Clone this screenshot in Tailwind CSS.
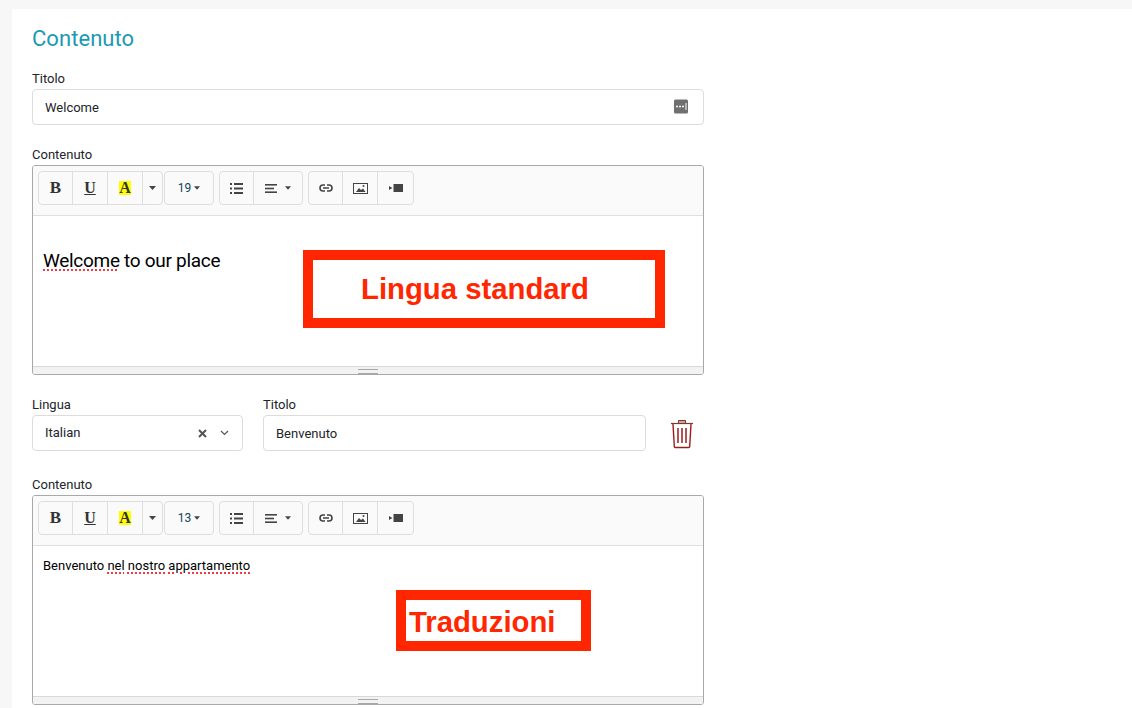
<!DOCTYPE html>
<html lang="it">
<head>
<meta charset="utf-8">
<script src="https://cdn.jsdelivr.net/npm/@tailwindcss/browser@4"></script>
<title>Contenuto</title>
</head>
<body class="m-0 w-[1132px] h-[708px] overflow-hidden bg-[#f7f7f8] font-['Roboto',sans-serif] text-[#212529]">
<div class="relative ml-[12px] mt-[9px] h-[699px] bg-white pl-[20px] w-[1120px]">
  <h2 class="text-[22px] tracking-[0.05px] leading-[26px] pt-[17px] h-[60px] box-border text-[#1b9ab2] font-normal">Contenuto</h2>

  <label class="block text-[13px] leading-[20px] w-[672px]">Titolo</label>
  <div class="w-[672px] h-[36px] border border-[#dcdcdc] rounded-[4px] flex items-center justify-between pl-[12px] pr-[14px] text-[13px] box-border">
    <span class="pt-[1px]">Welcome</span>
    <svg width="16" height="15" viewBox="0 0 16 15" class="relative -top-[1px]"><rect x="1" y="0.5" width="14" height="14" rx="1.5" fill="#6f6f6f"/><circle cx="4" cy="7.5" r="1" fill="#fff"/><circle cx="7" cy="7.5" r="1" fill="#fff"/><circle cx="10" cy="7.5" r="1" fill="#fff"/><rect x="12.5" y="4" width="1" height="7" fill="#fff"/></svg>
  </div>

  <label class="block text-[13px] leading-[20px] mt-[20px]">Contenuto</label>
  <div class="w-[672px] h-[210px] border border-[#a9a9a9] rounded-[3px] box-border flex flex-col overflow-hidden">
    <div class="h-[50px] bg-[#fafafa] border-b border-[#e0e0e0] pl-[5px] pt-[5px] flex gap-[5px] box-border shrink-0">
      <div class="flex h-[34px]">
        <div class="flex h-[34px] border border-[#dedede] rounded-[4px] box-border divide-x divide-[#dedede]">
          <span class="w-[34px] flex items-center justify-center font-['Liberation_Serif',serif] font-bold text-[17px] text-[#333]">B</span>
          <span class="w-[35px] flex items-center justify-center font-['Liberation_Serif',serif] font-bold text-[16px] text-[#333] underline">U</span>
          <span class="w-[35px] flex items-center justify-center"><span class="bg-[#ffff00] w-[12px] h-[14px] flex items-center justify-center font-['Liberation_Serif',serif] font-bold text-[16px] leading-[14px] text-[#333]">A</span></span>
          <span class="w-[19px] flex items-center justify-center"><svg width="7" height="4" viewBox="0 0 7 4"><path d="M0 0h7L3.5 4z" fill="#444"/></svg></span>
        </div>
        <div class="ml-[1px] w-[50px] flex items-center justify-center gap-[3px] border border-[#dedede] rounded-[4px] box-border text-[12px] text-[#16425b]">19 <svg width="6" height="4" viewBox="0 0 7 4"><path d="M0 0h7L3.5 4z" fill="#444"/></svg></div>
      </div>
      <div class="flex h-[34px] border border-[#dedede] rounded-[4px] box-border divide-x divide-[#dedede]">
        <span class="w-[34px] flex items-center justify-center"><svg width="13" height="11" viewBox="0 0 13 11" fill="#444"><rect y="0" width="2" height="2"/><rect y="4.5" width="2" height="2"/><rect y="9" width="2" height="2"/><rect x="4" y="0" width="9" height="2"/><rect x="4" y="4.5" width="9" height="2"/><rect x="4" y="9" width="9" height="2"/></svg></span>
        <span class="w-[48px] flex items-center justify-center gap-[8px]"><svg width="12" height="9" viewBox="0 0 12 9" fill="#444"><rect width="12" height="1.6"/><rect y="3.7" width="9" height="1.6"/><rect y="7.4" width="12" height="1.6"/></svg><svg width="6" height="4" viewBox="0 0 7 4"><path d="M0 0h7L3.5 4z" fill="#444"/></svg></span>
      </div>
      <div class="flex h-[34px] border border-[#dedede] rounded-[4px] box-border divide-x divide-[#dedede]">
        <span class="w-[34px] flex items-center justify-center"><svg width="14" height="8" viewBox="0 0 14 8" fill="none" stroke="#444" stroke-width="1.6"><path d="M6 1H4a3 3 0 0 0 0 6h2M8 1h2a3 3 0 0 1 0 6H8M4 4h6"/></svg></span>
        <span class="w-[35px] flex items-center justify-center"><svg width="15" height="11" viewBox="0 0 15 11"><rect x="0.5" y="0.5" width="14" height="10" fill="none" stroke="#444"/><path d="M3 9l3-4 2 2 2-1.5L12.5 9z" fill="#444"/><circle cx="10.5" cy="3" r="1" fill="#444"/></svg></span>
        <span class="w-[35px] flex items-center justify-center"><svg width="14" height="8" viewBox="0 0 14 8" fill="#444"><rect x="4.5" y="0" width="9.5" height="8"/><path d="M0 2l3.5 2L0 6z"/></svg></span>
      </div>
    </div>
    <div class="flex-1 bg-white pl-[10px] pt-[31px] text-[19px] leading-[28px] text-black tracking-[-0.3px]"><span class="underline decoration-dotted decoration-[#ee3b44] decoration-2 underline-offset-[2px]">Welcome</span> to our place</div>
    <div class="h-[8px] bg-[#f2f2f2] border-t border-[#d8d8d8] box-border flex justify-center items-center shrink-0">
      <div class="w-[20px] h-[5px] border-y border-[#a8a8a8] box-border relative top-[1px]"></div>
    </div>
  </div>

  <div class="flex w-[672px] mt-[20px]">
    <div class="w-[211px]">
      <label class="block text-[13px] leading-[20px]">Lingua</label>
      <div class="h-[36px] border border-[#dcdcdc] rounded-[4px] box-border flex items-center pl-[12px] pr-[13px] text-[13px]">
        <span class="flex-1">Italian</span>
        <svg width="9" height="9" viewBox="0 0 9 9" stroke="#555" stroke-width="2" class="mr-[13px]"><path d="M1 1l7 7M8 1l-7 7"/></svg>
        <svg width="9" height="6" viewBox="0 0 9 6" fill="none" stroke="#555" stroke-width="1.2"><path d="M1 1l3.5 3.5L8 1"/></svg>
      </div>
    </div>
    <div class="w-[383px] ml-[20px]">
      <label class="block text-[13px] leading-[20px]">Titolo</label>
      <div class="h-[36px] border border-[#dcdcdc] rounded-[4px] box-border flex items-center pl-[12px] pt-[1px] text-[13px]">Benvenuto</div>
    </div>
    <div class="ml-[24px] pt-[24px]">
      <svg width="24" height="30" viewBox="0 0 24 30" fill="none" stroke="#9c1c1c" class="block">
        <path d="M1 4.5h22" stroke="#7a3b2e" stroke-width="1.2"/>
        <path d="M8.5 4V1.5h7V4" stroke="#7a3b2e" fill="#c9a79d"/>
        <path d="M3 5l1.3 22.5a1 1 0 0 0 1 1h13.4a1 1 0 0 0 1-1L21 5" stroke-width="1.4"/>
        <path d="M8 9v15M12 9v15M16 9v15" stroke-width="1.5"/>
      </svg>
    </div>
  </div>

  <label class="block text-[13px] leading-[20px] mt-[24px]">Contenuto</label>
  <div class="w-[672px] h-[210px] border border-[#a9a9a9] rounded-[3px] box-border flex flex-col overflow-hidden">
    <div class="h-[50px] bg-[#fafafa] border-b border-[#e0e0e0] pl-[5px] pt-[5px] flex gap-[5px] box-border shrink-0">
      <div class="flex h-[34px]">
        <div class="flex h-[34px] border border-[#dedede] rounded-[4px] box-border divide-x divide-[#dedede]">
          <span class="w-[34px] flex items-center justify-center font-['Liberation_Serif',serif] font-bold text-[17px] text-[#333]">B</span>
          <span class="w-[35px] flex items-center justify-center font-['Liberation_Serif',serif] font-bold text-[16px] text-[#333] underline">U</span>
          <span class="w-[35px] flex items-center justify-center"><span class="bg-[#ffff00] w-[12px] h-[14px] flex items-center justify-center font-['Liberation_Serif',serif] font-bold text-[16px] leading-[14px] text-[#333]">A</span></span>
          <span class="w-[19px] flex items-center justify-center"><svg width="7" height="4" viewBox="0 0 7 4"><path d="M0 0h7L3.5 4z" fill="#444"/></svg></span>
        </div>
        <div class="ml-[1px] w-[50px] flex items-center justify-center gap-[3px] border border-[#dedede] rounded-[4px] box-border text-[12px] text-[#16425b]">13 <svg width="6" height="4" viewBox="0 0 7 4"><path d="M0 0h7L3.5 4z" fill="#444"/></svg></div>
      </div>
      <div class="flex h-[34px] border border-[#dedede] rounded-[4px] box-border divide-x divide-[#dedede]">
        <span class="w-[34px] flex items-center justify-center"><svg width="13" height="11" viewBox="0 0 13 11" fill="#444"><rect y="0" width="2" height="2"/><rect y="4.5" width="2" height="2"/><rect y="9" width="2" height="2"/><rect x="4" y="0" width="9" height="2"/><rect x="4" y="4.5" width="9" height="2"/><rect x="4" y="9" width="9" height="2"/></svg></span>
        <span class="w-[48px] flex items-center justify-center gap-[8px]"><svg width="12" height="9" viewBox="0 0 12 9" fill="#444"><rect width="12" height="1.6"/><rect y="3.7" width="9" height="1.6"/><rect y="7.4" width="12" height="1.6"/></svg><svg width="6" height="4" viewBox="0 0 7 4"><path d="M0 0h7L3.5 4z" fill="#444"/></svg></span>
      </div>
      <div class="flex h-[34px] border border-[#dedede] rounded-[4px] box-border divide-x divide-[#dedede]">
        <span class="w-[34px] flex items-center justify-center"><svg width="14" height="8" viewBox="0 0 14 8" fill="none" stroke="#444" stroke-width="1.6"><path d="M6 1H4a3 3 0 0 0 0 6h2M8 1h2a3 3 0 0 1 0 6H8M4 4h6"/></svg></span>
        <span class="w-[35px] flex items-center justify-center"><svg width="15" height="11" viewBox="0 0 15 11"><rect x="0.5" y="0.5" width="14" height="10" fill="none" stroke="#444"/><path d="M3 9l3-4 2 2 2-1.5L12.5 9z" fill="#444"/><circle cx="10.5" cy="3" r="1" fill="#444"/></svg></span>
        <span class="w-[35px] flex items-center justify-center"><svg width="14" height="8" viewBox="0 0 14 8" fill="#444"><rect x="4.5" y="0" width="9.5" height="8"/><path d="M0 2l3.5 2L0 6z"/></svg></span>
      </div>
    </div>
    <div class="flex-1 bg-white pl-[10px] pt-[10px] text-[13px] leading-[20px] text-black">Benvenuto <span class="underline decoration-dotted decoration-[#ee3b44] decoration-2 underline-offset-[2px]">nel</span> <span class="underline decoration-dotted decoration-[#ee3b44] decoration-2 underline-offset-[2px]">nostro</span> <span class="underline decoration-dotted decoration-[#ee3b44] decoration-2 underline-offset-[2px]">appartamento</span></div>
    <div class="h-[8px] bg-[#f2f2f2] border-t border-[#d8d8d8] box-border flex justify-center items-center shrink-0">
      <div class="w-[20px] h-[5px] border-y border-[#a8a8a8] box-border relative top-[1px]"></div>
    </div>
  </div>

  <div class="absolute left-[291px] top-[241px] w-[362px] h-[78px] border-[10px] border-[#ff2600] box-border font-['Liberation_Sans',sans-serif] font-bold text-[29.3px] leading-[58px] text-[#ff2600] pl-[48px]">Lingua standard</div>
  <div class="absolute left-[384px] top-[581px] w-[195px] h-[61px] border-[10px] border-[#ff2600] box-border font-['Liberation_Sans',sans-serif] font-bold text-[29.3px] leading-[43px] text-[#ff2600] pl-[3px]">Traduzioni</div>
</div>
</body>
</html>
